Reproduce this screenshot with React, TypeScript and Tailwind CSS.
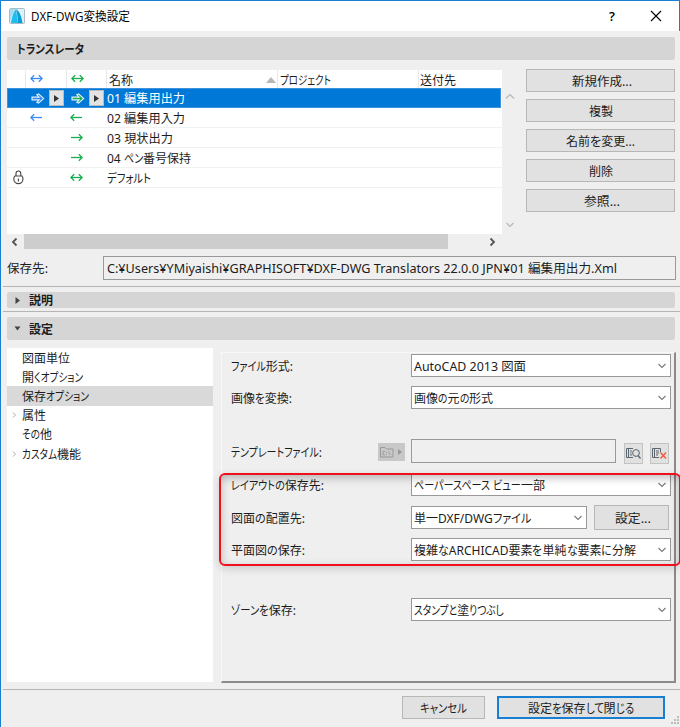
import { useLayoutEffect, useRef } from "react";
import clsx from "clsx";

interface FitTextProps {
  text: string;
  width: number;
  className?: string;
}

const KANA = /([\u3041-\u30ff]+)/;

// Narrows the kana runs of a label, so that the label takes the given width.
// Labels without kana are scaled as a whole.
function FitText({ text, width, className }: FitTextProps) {
  const ref = useRef<HTMLSpanElement>(null);
  const runs = text.split(KANA).filter(Boolean);
  const hasKana = KANA.test(text);

  useLayoutEffect(() => {
    const root = ref.current;
    if (!root) return;
    let fixed = 0;
    let flexible = 0;
    const items = Array.from(root.children) as HTMLElement[];
    const sizes = items.map((el) => (el.firstElementChild as HTMLElement).getBoundingClientRect().width);
    items.forEach((el, i) => {
      if (el.dataset.kana === "1") flexible += sizes[i];
      else fixed += sizes[i];
    });
    const scale = flexible > 0 ? (width - fixed) / flexible : 1;
    items.forEach((el, i) => {
      const s = el.dataset.kana === "1" ? scale : 1;
      el.style.width = `${sizes[i] * s}px`;
      (el.firstElementChild as HTMLElement).style.transform = `scaleX(${s})`;
    });
  }, [text, width]);

  return (
    <span ref={ref} className={clsx("inline-flex shrink-0 pt-[2px] whitespace-pre", className)} style={{ width }}>
      {runs.map((run, i) => (
        <span key={i} data-kana={!hasKana || KANA.test(run) ? "1" : "0"} className="block shrink-0">
          <span className="inline-block origin-left [font-feature-settings:'palt']">{run}</span>
        </span>
      ))}
    </span>
  );
}

interface ButtonProps {
  text: string;
  width: number;
  className?: string;
}

function Button({ text, width, className }: ButtonProps) {
  return (
    <button type="button" className={clsx("flex items-center justify-center bg-[#e1e1e1]", className)}>
      <FitText text={text} width={width} />
    </button>
  );
}

type ArrowKind = "left" | "right" | "both";

function Arrow({ kind, color }: { kind: ArrowKind; color: string }) {
  return (
    <svg width="13" height="9" viewBox="0 0 13 9" fill="none" stroke={color} strokeWidth="1.3">
      <path d="M1 4.5H12" />
      {kind !== "right" && <path d="M4.2 1.2L.9 4.5L4.2 7.8" />}
      {kind !== "left" && <path d="M8.8 1.2L12.1 4.5L8.8 7.8" />}
    </svg>
  );
}

function OutlineArrow({ fill }: { fill: string }) {
  return (
    <svg width="14" height="11" viewBox="0 0 14 11" fill={fill} stroke="#e6f1fb" strokeWidth="1.1">
      <path d="M1 4.1H8L5.8 1.7L7.6 .9L12.7 5.5L7.6 10.1L5.8 9.3L8 6.9H1Z" />
    </svg>
  );
}

function PopupButton() {
  return (
    <span className="flex h-4 w-[15px] items-center justify-center border border-[#bcbcbc] bg-[#e3e3e3]">
      <svg width="5" height="7" viewBox="0 0 5 7"><path d="M0 0L5 3.5L0 7Z" fill="#333" /></svg>
    </span>
  );
}

function Chevron({ dir, color = "#555", bold }: { dir: "up" | "down" | "left" | "right"; color?: string; bold?: boolean }) {
  const paths = {
    up: "M1 6.5L5 2.5L9 6.5",
    down: "M1.5 3L5 6.5L8.5 3",
    left: "M6.5 1.5L3 5L6.5 8.5",
    right: "M3.5 1.5L7 5L3.5 8.5",
  };
  return (
    <svg width="10" height="10" viewBox="0 0 10 10" fill="none" stroke={color} strokeWidth={bold ? 1.8 : 1.1}>
      <path d={paths[dir]} />
    </svg>
  );
}

function Select({ text, width, className }: ButtonProps) {
  return (
    <div className={clsx("flex h-[23px] items-center justify-between border border-[#999] bg-white pr-[3px] pl-[2px]", className)}>
      <FitText text={text} width={width} />
      <Chevron dir="down" color="#777" />
    </div>
  );
}

function SectionHeader({ text, width, arrow, className }: ButtonProps & { arrow?: "right" | "down" }) {
  return (
    <div className={clsx("mr-[5px] ml-[6px] flex items-center rounded-[2px] bg-[#d5d5d5] font-bold", className)}>
      {arrow && (
        <svg width="7" height="7" viewBox="0 0 7 7" className="mr-[7px] ml-[7px]">
          <path d={arrow === "right" ? "M1.5 0L6 3.5L1.5 7Z" : "M.5 1.5L6.5 1.5L3.5 5.5Z"} fill="#444" />
        </svg>
      )}
      <FitText text={text} width={width} className={arrow ? "ml-[1px]" : "ml-[10px]"} />
    </div>
  );
}

interface Translator {
  name: string;
  width: number;
  open?: ArrowKind;
  save: ArrowKind;
  locked?: boolean;
}

const TRANSLATORS: Translator[] = [
  { name: "02 編集用入力", width: 78, open: "left", save: "left" },
  { name: "03 現状出力", width: 66, save: "right" },
  { name: "04 ペン番号保持", width: 84, save: "right" },
  { name: "デフォルト", width: 44, save: "both", locked: true },
];

const ACTIONS = [
  { text: "新規作成...", width: 60 },
  { text: "複製", width: 24 },
  { text: "名前を変更...", width: 69 },
  { text: "削除", width: 24 },
  { text: "参照...", width: 36 },
];

const PAGES = [
  { text: "図面単位", width: 48 },
  { text: "開くオプション", width: 61 },
  { text: "保存オプション", width: 67, selected: true },
  { text: "属性", width: 24, expandable: true },
  { text: "その他", width: 30 },
  { text: "カスタム機能", width: 59, expandable: true },
];

function TitleBar() {
  return (
    <div className="flex h-[31px] shrink-0 items-center border-t border-r border-[#187fd3] bg-white font-['Open_Sans','Noto_Sans_CJK_JP',sans-serif] text-black">
      <svg width="16" height="16" viewBox="0 0 16 16" className="ml-[8px]">
        <rect x=".5" y=".5" width="15" height="15" rx="1" fill="#dff1f8" stroke="#a9bcc6" />
        <path d="M1 1H6.5C4 4 2.5 8 1 14Z" fill="#a5dcf0" />
        <path d="M2 15C3 8 4.5 4 7 1.2L9 15Z" fill="#22bdec" />
        <path d="M7 1.2C10.5 3 12.5 8 13.5 15H9C8.8 9 8 4.5 7 1.2Z" fill="#0b9ed6" />
      </svg>
      <FitText text="DXF-DWG変換設定" width={99} className="ml-[6px]" />
      <span className="mr-[35px] ml-auto text-[13px] font-semibold">?</span>
      <svg width="12" height="12" viewBox="0 0 12 12" stroke="#000" strokeWidth="1.1" className="mr-[17px]">
        <path d="M1 1L11 11M11 1L1 11" />
      </svg>
    </div>
  );
}

function TranslatorList() {
  return (
    <div className="w-[511px]">
      <div className="flex">
        <div className="h-[164px] w-[495px] bg-white">
          <div className="flex h-[18px]">
            <div className="w-[19px] border-r border-[#e8e8e8]" />
            <div className="flex w-[41px] justify-start border-r border-[#e8e8e8] pt-[4px] pl-[4px]">
              <Arrow kind="both" color="#3d8bf5" />
            </div>
            <div className="flex w-10 border-r border-[#e8e8e8] pt-[4px] pl-[4px]">
              <Arrow kind="both" color="#19ae4f" />
            </div>
            <div className="flex w-[171px] items-center justify-between border-r border-[#e8e8e8] pt-[2px] pr-[1px] pl-[2px]">
              <FitText text="名称" width={24} />
              <svg width="10" height="6" viewBox="0 0 10 6"><path d="M5 0L10 6H0Z" fill="#b8b8b8" /></svg>
            </div>
            <div className="flex w-[141px] items-center border-r border-[#e8e8e8] pt-[2px] pl-[2px]">
              <FitText text="プロジェクト" width={51} />
            </div>
            <div className="flex items-center pt-[2px] pl-[1px]">
              <FitText text="送付先" width={36} />
            </div>
          </div>
          <div className="flex h-5 w-[494px] items-center border border-[#3c93dc] bg-[#0078d7] pl-[23px] text-white">
            <OutlineArrow fill="#2f86f5" />
            <span className="ml-[4px]"><PopupButton /></span>
            <span className="ml-[7px]"><OutlineArrow fill="#19ae4f" /></span>
            <span className="ml-[4px]"><PopupButton /></span>
            <FitText text="01 編集用出力" width={78} className="ml-[3px]" />
          </div>
          {TRANSLATORS.map((t) => (
            <div key={t.name} className="flex h-5 items-center border-b border-[#f1f1f1]">
              <div className="flex w-[23px] pl-[5px]">
                {t.locked && (
                  <svg width="13" height="15" viewBox="0 0 13 15" fill="none" stroke="#444" strokeWidth="1.1">
                    <path d="M4 6V3.4A2.4 2.4 0 0 1 8.8 3.4V6M6.4 8.6V11.4" />
                    <path d="M2.8 6H10A5 5 0 0 1 11 9A4.6 4.6 0 0 1 1.8 9A5 5 0 0 1 2.8 6Z" />
                  </svg>
                )}
              </div>
              <div className="w-10">{t.open && <Arrow kind={t.open} color="#3d8bf5" />}</div>
              <div className="w-[37px]"><Arrow kind={t.save} color="#19ae4f" /></div>
              <FitText text={t.name} width={t.width} />
            </div>
          ))}
        </div>
        <div className="flex w-4 flex-col items-center justify-between pt-[22px] pb-[4px]">
          <Chevron dir="up" color="#b5b5b5" />
          <Chevron dir="down" color="#b5b5b5" />
        </div>
      </div>
      <div className="flex h-[15px] w-[495px] items-center">
        <span className="w-[17px] pl-[3px]"><Chevron dir="left" bold /></span>
        <div className="h-full w-[424px] bg-[#cdcdcd]" />
        <span className="mr-[5px] ml-auto"><Chevron dir="right" bold /></span>
      </div>
    </div>
  );
}

function SettingRow({ label, labelWidth, className, children }: {
  label: string;
  labelWidth: number;
  className?: string;
  children: React.ReactNode;
}) {
  return (
    <div className={clsx("flex items-center", className)}>
      <div className="flex w-[181px] pt-[1px] pl-[1px]"><FitText text={label} width={labelWidth} /></div>
      {children}
    </div>
  );
}

function SaveOptions() {
  return (
    <div className="ml-[8px] h-[331px] w-[455px] border-t border-r-2 border-b-2 border-l border-t-[#f8f8f8] border-r-[#8b8b8b] border-b-[#8b8b8b] border-l-[#f8f8f8] pl-[8px]">
      <SettingRow label="ファイル形式:" labelWidth={62} className="mt-[1px] h-[23px]">
        <Select text="AutoCAD 2013 図面" width={112} className="w-[260px]" />
      </SettingRow>
      <SettingRow label="画像を変換:" labelWidth={61} className="mt-[9px] h-[23px]">
        <Select text="画像の元の形式" width={79} className="w-[260px]" />
      </SettingRow>
      <div className="mt-[30px] flex h-6 items-start">
        <div className="flex w-[148px] pt-[3px] pl-[1px]"><FitText text="テンプレートファイル:" width={91} /></div>
        <div className="mt-[4px] mr-[6px] flex h-[18px] w-[27px] items-center bg-[#c8c8c8]">
          <svg width="27" height="18" viewBox="0 0 27 18" fill="none" stroke="#999">
            <path d="M2.5 14V4.5H7L8.5 6H15V14Z" />
            <path d="M7 8.5H5V12H7M8.5 9V10M8.5 11V12M10.5 8.5L12.5 12" strokeWidth=".9" />
            <path d="M20 6L24 9L20 12Z" fill="#999" stroke="none" />
          </svg>
        </div>
        <div className="h-6 w-[205px] border border-[#999] bg-[#efefef]" />
        <span className="mt-[4px] ml-[8px] flex h-[21px] w-[19px] items-center justify-center border border-[#c3c3c3] bg-[#e1e1e1]">
          <svg width="15" height="13" viewBox="0 0 15 13" fill="none" stroke="#5b666f" className="shrink-0">
            <path d="M7 1.5H.5V10.5H7M2.5 1.5V10.5M4 4H6M4 6H5.5M4 8H6" />
            <circle cx="10" cy="6" r="3.4" />
            <path d="M12 8.5L14.5 11.5" strokeWidth="1.3" />
          </svg>
        </span>
        <span className="mt-[4px] ml-[7px] flex h-[21px] w-[19px] items-center justify-center border border-[#c3c3c3] bg-[#e1e1e1]">
          <svg width="15" height="13" viewBox="0 0 15 13" fill="none" stroke="#5b666f" className="shrink-0">
            <path d="M8.5 5V1.5H.5V10.5H7M2.5 1.5V10.5M4 4H7M4 6H7M4 8H6" />
            <path d="M8.5 5.5L14 11.5M14 5.5L8.5 11.5" stroke="#f0593c" strokeWidth="1.4" />
          </svg>
        </span>
      </div>
      <SettingRow label="レイアウトの保存先:" labelWidth={93} className="mt-[10px] h-[23px]">
        <Select text="ペーパースペース ビュー一部" width={131} className="w-[260px]" />
      </SettingRow>
      <SettingRow label="図面の配置先:" labelWidth={74} className="mt-[9px] h-[25px]">
        <Select text="単一DXF/DWGファイル" width={117} className="w-[176px]" />
        <Button text="設定..." width={36} className="ml-[7px] h-[25px] w-[75px] border border-[#b7b7b7]" />
      </SettingRow>
      <SettingRow label="平面図の保存:" labelWidth={74} className="mt-[8px] h-[23px]">
        <Select text="複雑なARCHICAD要素を単純な要素に分解" width={222} className="w-[260px]" />
      </SettingRow>
      <SettingRow label="ゾーンを保存:" labelWidth={65} className="mt-[37px] h-[23px]">
        <Select text="スタンプと塗りつぶし" width={90} className="w-[260px]" />
      </SettingRow>
    </div>
  );
}

export default function App() {
  return (
    <div className="relative flex h-[727px] w-[680px] flex-col overflow-hidden border-l border-[#187fd3] bg-[#efefef] font-['Noto_Sans','Noto_Sans_CJK_JP',sans-serif] text-[12px] leading-[18px] text-[#1c1c1c]">
      <TitleBar />
      <SectionHeader text="トランスレータ" width={67} className="mt-[6px] h-[23px]" />

      <div className="mt-[9px] ml-[6px] flex h-[180px]">
        <div className="pt-[1px]"><TranslatorList /></div>
        <div className="ml-[8px] flex flex-col gap-[7px]">
          {ACTIONS.map((a) => (
            <Button key={a.text} text={a.text} width={a.width} className="h-[23px] w-[149px] border border-[#b7b7b7]" />
          ))}
        </div>
      </div>

      <div className="mt-[7px] ml-[6px] flex h-6 items-center">
        <FitText text="保存先:" width={41} />
        <div className="ml-[55px] flex h-6 w-[573px] items-center border border-[#999] pl-[3px]">
          <FitText text="C:¥Users¥YMiyaishi¥GRAPHISOFT¥DXF-DWG Translators 22.0.0 JPN¥01 編集用出力.Xml" width={510} />
        </div>
      </div>

      <div className="mt-[6px] ml-[2px] h-px bg-[#b4b4b4]" />
      <SectionHeader text="説明" width={24} arrow="right" className="mt-[5px] h-4" />
      <div className="mt-[3px] ml-[2px] h-px bg-[#b4b4b4]" />
      <SectionHeader text="設定" width={24} arrow="down" className="mt-[5px] h-[23px]" />

      {/* Settings: page list and the open page */}
      <div className="mt-[8px] ml-[6px] flex h-[334px]">
        <div className="w-[206px] bg-white">
          {PAGES.map((p) => (
            <div key={p.text} className={clsx("flex h-[19.2px] items-center", p.selected && "bg-[#d9d9d9]")}>
              <span className="w-[15px] pl-[3px]">
                {p.expandable && (
                  <svg width="8" height="8" viewBox="0 0 8 8" fill="none" stroke="#aaa"><path d="M3 1.5L5.5 4L3 6.5" /></svg>
                )}
              </span>
              <FitText text={p.text} width={p.width} />
            </div>
          ))}
        </div>
        <div className="pt-[4px]"><SaveOptions /></div>
      </div>

      <div className="mt-[7px] ml-[2px] h-px bg-[#b4b4b4]" />
      <div className="mt-[6px] flex justify-end pr-[15px]">
        <Button text="キャンセル" width={47} className="h-[23px] w-[83px] border border-[#b7b7b7]" />
        <Button text="設定を保存して閉じる" width={106} className="ml-[12px] h-[23px] w-[168px] border-2 border-[#187fd3]" />
      </div>

      {/* Resize grip */}
      <svg width="10" height="10" viewBox="0 0 10 10" fill="#bdbdbd" className="absolute right-0 bottom-[1px]">
        <path d="M7 0H9V2H7ZM4 3H6V5H4ZM7 3H9V5H7ZM1 6H3V8H1ZM4 6H6V8H4ZM7 6H9V8H7Z" />
      </svg>

      {/* Highlight frame */}
      <div className="absolute top-[473px] left-[218px] h-[93px] w-[462px] rounded-[6px] border-2 border-[#f0101c] shadow-[0_3px_8px_rgba(0,0,0,0.15),inset_0_3px_8px_rgba(0,0,0,0.25)]" />
    </div>
  );
}
